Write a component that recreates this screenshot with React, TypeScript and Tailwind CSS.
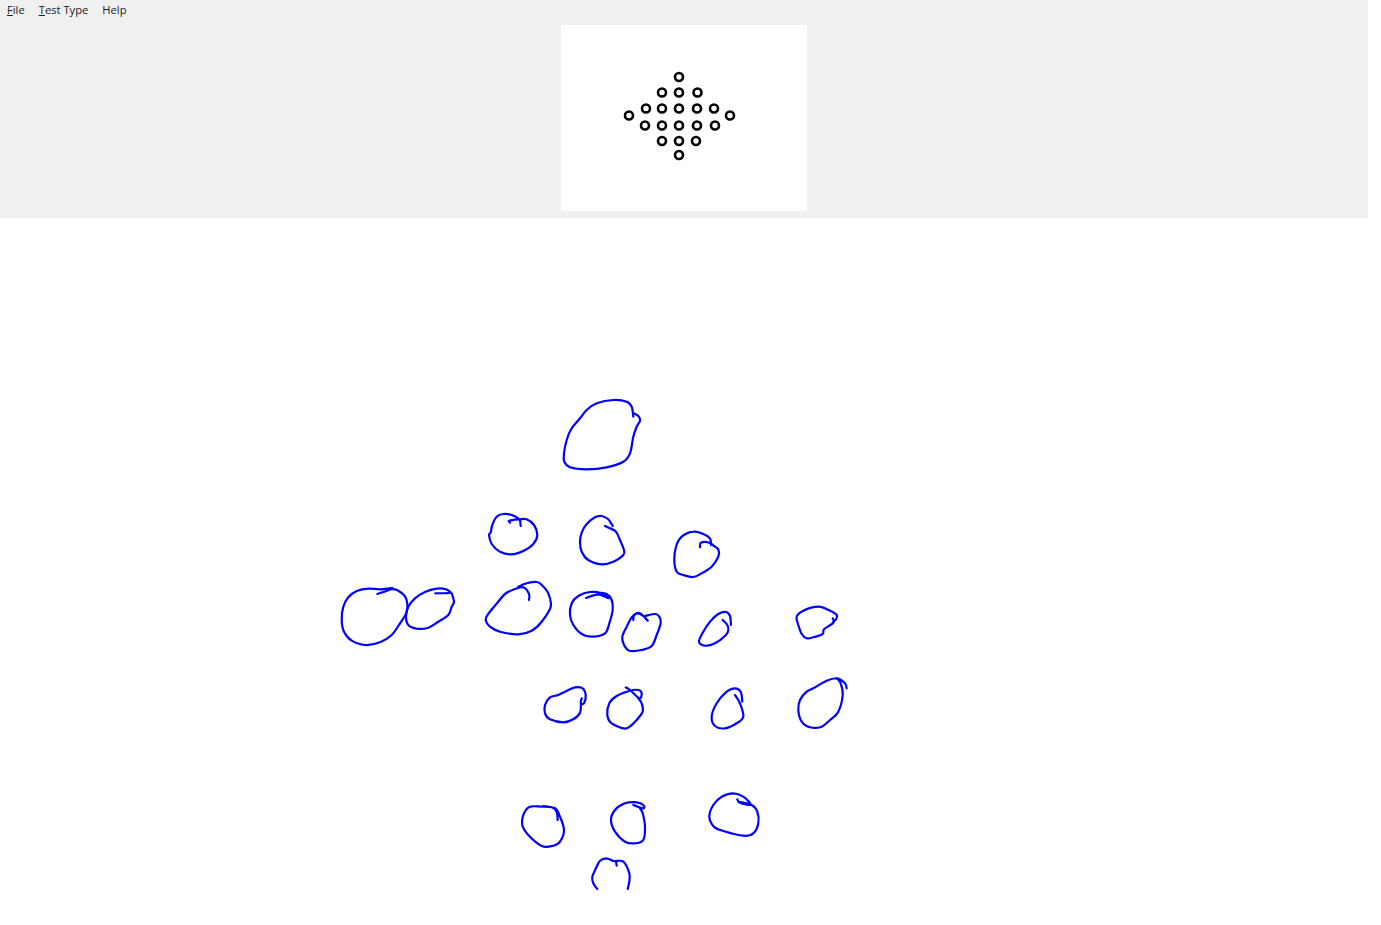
const A: [number, number] = [330, 390];
const B: [number, number] = [600, 510];
const C: [number, number] = [510, 670];

type Stroke = { o: [number, number]; p: number[] };

const strokes: Stroke[] = [
  { o: A, p: [910,80,905,50,890,35,850,30,800,40,770,60,750,85,725,115,710,150,702,190,703,215,720,232,770,238,830,232,880,215,900,190,910,140,920,110,930,92,925,78,908,68] },
  { o: A, p: [540,398,538,392,568,388,590,388,612,405,622,435,610,462,580,483,545,493,510,485,485,462,477,435,482,428,487,405,500,380,520,372,545,375,568,388,572,408] },
  { o: A, p: [848,408,835,388,815,378,795,382,770,402,755,428,750,455,755,485,775,510,815,523,850,515,880,495,882,480,870,450,858,425,840,415,825,408] },
  { o: A, p: [142,612,188,595,150,598,115,596,80,603,55,622,40,650,35,690,42,725,65,752,105,765,150,757,185,735,210,700,230,665,228,625,205,602,185,597] },
  { o: A, p: [316,610,360,608,345,597,320,596,285,606,255,625,235,650,228,680,235,705,260,716,295,713,325,695,355,675,365,650,372,635,365,610] },
  { o: A, p: [597,630,597,612,580,592,555,597,525,612,505,635,480,665,467,687,480,710,510,725,565,733,605,722,635,695,662,650,655,610,635,585,620,576,590,580,565,590] },
  { o: A, p: [768,624,805,613,835,625,815,610,780,606,745,618,725,640,720,675,730,705,755,732,785,740,825,730,838,700,848,660,845,630,830,612,800,607] },
  { o: B, p: [100,330,103,315,120,310,143,332,130,318,112,310,95,322,80,350,67,380,72,405,88,422,125,420,155,408,170,375,182,340,178,320,165,312,135,318] },
  { o: B, p: [368,330,382,345,385,360,378,375,345,400,315,407,297,395,310,365,330,335,355,312,378,306,390,318,393,345] },
  { o: B, p: [698,325,700,338,672,358,668,372,640,382,620,385,605,372,595,345,590,320,610,302,655,290,690,302,710,315,708,328,698,338] },
  { o: B, p: [300,112,303,98,328,98,342,108,355,118,355,140,335,170,305,190,280,201,250,195,230,185,223,150,228,110,245,80,280,65,310,72,330,85,333,105] },
  { o: B, p: [740,535,735,520,712,505,680,512,640,535,620,545,600,570,595,600,605,635,630,652,665,650,690,630,715,605,728,555,722,520,710,505] },
  { o: B, p: [77,532,90,540,118,565,125,550,115,540,90,542,50,558,28,580,22,615,35,640,75,656,95,645,110,630,128,605,125,580,115,565] },
  { o: B, p: [405,555,420,580,430,620,410,640,375,655,345,648,335,620,350,580,380,545,405,535,422,545,427,575] },
  { o: C, p: [215,85,212,100,222,100,227,75,218,55,195,52,165,65,145,75,120,82,105,105,105,130,120,148,160,157,190,148,210,128,213,95] },
  { o: C, p: [143,450,140,425,125,412,95,410,60,410,42,430,37,465,55,495,95,528,130,527,150,515,162,480,150,440,135,415,100,408] },
  { o: C, p: [370,405,400,415,400,405,380,397,345,400,315,420,303,450,315,485,345,515,375,520,400,510,405,470,398,430,390,415] },
  { o: C, p: [682,388,690,398,722,404,700,380,670,370,635,380,610,405,598,440,612,470,640,483,700,497,730,490,745,460,742,425,725,405,685,395] },
  { o: C, p: [262,657,250,640,247,620,258,595,270,572,290,565,310,573,340,575,358,610,358,635,353,657] },
  { o: C, p: [320,587,318,575] },
];

function toPath({ o, p }: Stroke): string {
  const pts: [number, number][] = [];
  for (let i = 0; i < p.length; i += 2) pts.push([o[0] + p[i] / 3, o[1] + p[i + 1] / 3]);
  let d = `M${pts[0][0].toFixed(1)} ${pts[0][1].toFixed(1)}`;
  for (let i = 0; i < pts.length - 1; i++) {
    const a = pts[Math.max(i - 1, 0)];
    const b = pts[i];
    const c = pts[i + 1];
    const e = pts[Math.min(i + 2, pts.length - 1)];
    const c1x = b[0] + (c[0] - a[0]) / 6;
    const c1y = b[1] + (c[1] - a[1]) / 6;
    const c2x = c[0] - (e[0] - b[0]) / 6;
    const c2y = c[1] - (e[1] - b[1]) / 6;
    d += ` C${c1x.toFixed(1)} ${c1y.toFixed(1)} ${c2x.toFixed(1)} ${c2y.toFixed(1)} ${c[0].toFixed(1)} ${c[1].toFixed(1)}`;
  }
  return d;
}

const dots: [number, number][] = [
  [679,77],
  [662,92.5],[679,92.5],[697.5,92.5],
  [646,108.5],[662,108.5],[679,108.5],[697,108.5],[714,108.5],
  [629,115.5],[730,115.5],
  [645,125.5],[662,125.5],[679,125.5],[697,125.5],[715,125.5],
  [662,141],[679,141],[696,141],
  [679,155],
];

function MenuItem({ first, rest }: { first: string; rest: string }) {
  return (
    <span className="whitespace-nowrap">
      {first ? <u>{first}</u> : null}
      {rest}
    </span>
  );
}

export default function App() {
  return (
    <div className="w-[1381px] h-[925px] bg-white overflow-hidden font-['Open_Sans','Noto_Sans',sans-serif] text-[11.2px] leading-[20px] text-[#1a1a1a]">
      <div className="w-[1368px] h-[218px] bg-[#f0f0f0] flex flex-col">
        <div className="h-[25px] pl-[7px] flex items-start gap-[14px]">
          <MenuItem first="F" rest="ile" />
          <MenuItem first="T" rest="est Type" />
          <MenuItem first="" rest="Help" />
        </div>
        <div className="w-[246px] h-[186px] bg-white mx-auto">
          <svg width="246" height="186" viewBox="561 25 246 186" className="block">
            {dots.map(([x, y], i) => (
              <circle key={i} cx={x} cy={y} r="4" fill="none" stroke="#000" strokeWidth="2.6" />
            ))}
          </svg>
        </div>
      </div>
      <svg width="1381" height="707" viewBox="0 218 1381 707" className="block">
        {strokes.map((s, i) => (
          <path key={i} d={toPath(s)} fill="none" stroke="#0000ff" strokeWidth="2.2" strokeLinecap="round" strokeLinejoin="round" />
        ))}
      </svg>
    </div>
  );
}
